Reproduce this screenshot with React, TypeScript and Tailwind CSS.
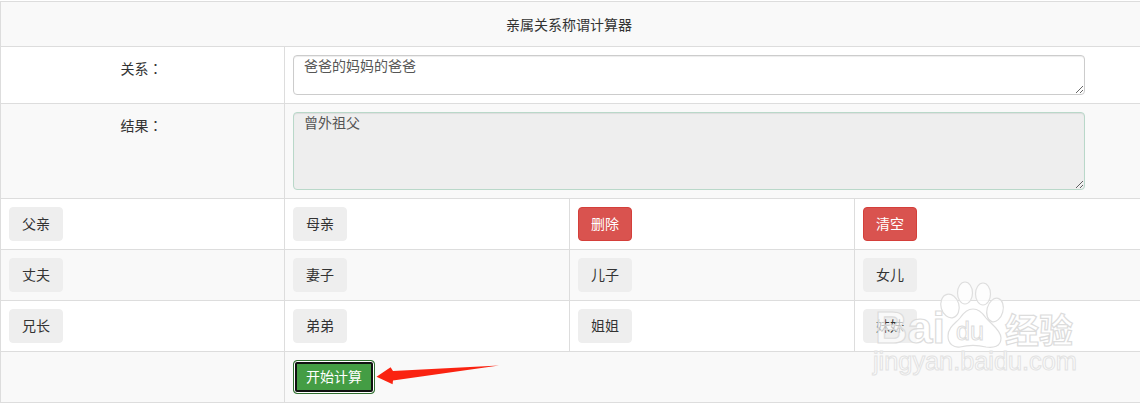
const Btn = ({ label, danger }: { label: string; danger?: boolean }) => (
  <button
    className={
      danger
        ? "w-[54px] h-[34px] pb-0.5 rounded border border-[#d43f3a] bg-[#d9534f] text-white text-sm"
        : "w-[54px] h-[34px] pb-0.5 rounded border border-[#eeeeee] bg-[#eeeeee] text-[#333] text-sm"
    }
  >
    {label}
  </button>
);

const buttonRows = [
  { bg: "bg-white", items: ["父亲", "母亲", "删除", "清空"] },
  { bg: "bg-[#f9f9f9]", items: ["丈夫", "妻子", "儿子", "女儿"] },
  { bg: "bg-white", items: ["兄长", "弟弟", "姐姐", "妹妹"] },
];

const Watermark = () => (
  <svg className="absolute left-[870px] top-[278px] pointer-events-none" width="210" height="104" viewBox="0 0 210 104">
    <g fill="#fff" fillOpacity="0.7" stroke="#dedede" strokeWidth="1.2">
      <ellipse cx="80" cy="28" rx="9" ry="12" transform="rotate(-15 80 28)" />
      <ellipse cx="95" cy="15" rx="7.500" ry="11" />
      <ellipse cx="113" cy="16" rx="7.500" ry="11" />
      <ellipse cx="125" cy="32" rx="8" ry="12" transform="rotate(15 125 32)" />
      <path d="M78 58c0-9 8-13 12-18 4-6 8-9 13-9s9 3 13 9c4 5 15 12 15 20 0 9-8 10-15 9-8-2-18-2-26 0-6 1-12-3-12-11z" />
    </g>
    <text x="5" y="65" fontFamily="'Liberation Sans', sans-serif" fontWeight="700" fontSize="45" fill="#fff" fillOpacity="0.7" stroke="#dcdcdc" strokeWidth="1.2">Bai</text>
    <text x="86" y="62" fontFamily="'Liberation Sans', sans-serif" fontSize="25" fill="#fff" stroke="#dcdcdc" strokeWidth="1">du</text>
    <text x="135" y="65" fontFamily="'Noto Sans CJK SC', sans-serif" fontWeight="700" fontSize="34" fill="#fff" fillOpacity="0.85" stroke="#dcdcdc" strokeWidth="1.2">经验</text>
    <text x="3" y="92" fontFamily="'Liberation Sans', sans-serif" fontSize="25.300" fill="#fff" fillOpacity="0.8" stroke="#e2e2e2" strokeWidth="1">jingyan.baidu.com</text>
  </svg>
);

const Arrow = () => (
  <svg className="absolute left-[376px] top-[362px]" width="126" height="26" viewBox="0 0 126 26">
    <path d="M0.500 14.700 L14.600 5.300 L17 9 L123 3.500 L17 18.500 L16.600 22.300 Z" fill="#fa2311" />
  </svg>
);

const Colon = () => <span className="font-['Noto_Sans_CJK_TC',sans-serif]">：</span>;

export default function App() {
  return (
    <div className="relative w-[1140px] h-[404px] pt-px bg-white font-['Noto_Sans_CJK_SC','Liberation_Sans',sans-serif] text-sm text-[#333] overflow-hidden">
      <table className="w-[1140px] table-fixed border-collapse">
        <colgroup>
          <col className="w-[284px]" />
          <col className="w-[285px]" />
          <col className="w-[285px]" />
          <col className="w-[286px]" />
        </colgroup>
        <tbody>
          <tr className="h-[45px] bg-[#f9f9f9]">
            <td colSpan={4} className="border border-[#dddddd] text-center align-middle pb-px pr-[3px]">
              亲属关系称谓计算器
            </td>
          </tr>
          <tr className="h-[57px] bg-white">
            <td className="border border-[#dddddd] text-center align-top pt-[11px] pr-0.5">
              关系
              <Colon />
            </td>
            <td colSpan={3} className="border border-[#dddddd] align-top pt-2 pl-2">
              <textarea
                readOnly
                value="爸爸的妈妈的爸爸"
                className="block w-[792px] h-10 rounded border border-[#cccccc] bg-white px-2.5 py-0 text-sm leading-[19px] text-[#555] shadow-[inset_0_1px_1px_rgba(0,0,0,0.075)] outline-none"
              />
            </td>
          </tr>
          <tr className="h-[95px] bg-[#f9f9f9]">
            <td className="border border-[#dddddd] text-center align-top pt-[11px] pr-0.5">
              结果
              <Colon />
            </td>
            <td colSpan={3} className="border border-[#dddddd] align-top pt-2 pl-2">
              <textarea
                readOnly
                value="曾外祖父"
                className="block w-[792px] h-[78px] rounded border border-[#b9d8c9] bg-[#eeeeee] px-2.5 py-0 text-sm leading-[19px] text-[#555] shadow-[inset_0_1px_1px_rgba(0,0,0,0.075)] outline-none"
              />
            </td>
          </tr>
          {buttonRows.map((row) => (
            <tr key={row.items[0]} className={`h-[51px] ${row.bg}`}>
              {row.items.map((item) => (
                <td key={item} className="border border-[#dddddd] align-middle pl-2">
                  <Btn label={item} danger={item === "删除" || item === "清空"} />
                </td>
              ))}
            </tr>
          ))}
          <tr className="h-[51px] bg-[#f9f9f9]">
            <td className="border border-[#dddddd]"></td>
            <td colSpan={3} className="border border-[#dddddd] align-middle pl-2">
              <button className="block w-[82px] h-[34px] pb-0.5 rounded border border-[#2f6f2f] bg-[#449d44] text-white text-sm shadow-[inset_0_0_0_1px_#ffffff,inset_0_0_0_3px_#111111]">
                开始计算
              </button>
            </td>
          </tr>
        </tbody>
      </table>
      <Arrow />
      <Watermark />
    </div>
  );
}
